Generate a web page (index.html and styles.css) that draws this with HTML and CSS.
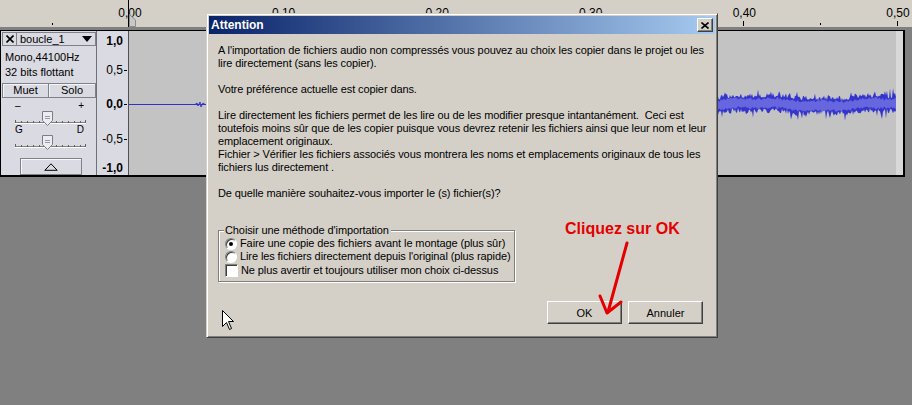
FILE: index.html
```html
<!DOCTYPE html>
<html lang="fr">
<head>
  <meta charset="UTF-8">
  <title>Audacity - Attention</title>
  <link rel="stylesheet" href="styles.css">
</head>
<body>

<div class="ruler">
  <div class="scale">
    <div class="cell"><div class="tick minor"></div></div>
    <div class="cell"><span class="label">0,00</span><div class="tick"></div></div>
    <div class="cell"><div class="tick minor"></div></div>
    <div class="cell"><span class="label">0,10</span><div class="tick"></div></div>
    <div class="cell"><div class="tick minor"></div></div>
    <div class="cell"><span class="label">0,20</span><div class="tick"></div></div>
    <div class="cell"><div class="tick minor"></div></div>
    <div class="cell"><span class="label">0,30</span><div class="tick"></div></div>
    <div class="cell"><div class="tick minor"></div></div>
    <div class="cell"><span class="label">0,40</span><div class="tick"></div></div>
    <div class="cell"><div class="tick minor"></div></div>
    <div class="cell last"><span class="label">0,50</span><div class="tick"></div></div>
  </div>
  <div class="cursor-line"></div>
  <svg class="play-head" width="8" height="13" viewBox="0 0 8 13">
    <polygon points="0.5,0.5 6.5,6 6.5,12.5 0.5,12.5" fill="#c8c8c8" stroke="#8a8a8a"/>
  </svg>
</div>

<div class="tracks">
  <div class="track">
    <div class="track-info">
      <div class="title-row">
        <div class="close-box">
          <svg width="8" height="8" viewBox="0 0 8 8"><path d="M0.5 0.5 L7.5 7.5 M7.5 0.5 L0.5 7.5" stroke="#000" stroke-width="1.6"/></svg>
        </div>
        <div class="name-box">
          <span>boucle_1</span>
          <svg width="10" height="6" viewBox="0 0 10 6"><polygon points="0,0 10,0 5,6" fill="#000"/></svg>
        </div>
      </div>
      <div class="info-line first">Mono,44100Hz</div>
      <div class="info-line">32 bits flottant</div>
      <div class="mute-solo">
        <div class="small-btn mute">Muet</div>
        <div class="small-btn solo">Solo</div>
      </div>
      <div class="slider">
        <div class="slider-labels"><span>–</span><span>+</span></div>
        <svg width="95" height="16" viewBox="0 0 95 16">
          <line x1="13" y1="12.5" x2="84" y2="12.5" stroke="#808080"/>
          <line x1="13" y1="13.5" x2="84" y2="13.5" stroke="#ffffff"/>
          <path d="M13.5 10 V13 M19.5 11 V13 M25.5 11 V13 M31.5 11 V13 M37.5 11 V13 M54.5 11 V13 M60.5 11 V13 M66.5 11 V13 M72.5 11 V13 M78.5 11 V13 M83.5 10 V13" stroke="#606060"/>
          <polygon points="40.5,1.5 50.5,1.5 50.5,10.5 45.5,15.5 40.5,10.5" fill="#ececf2" stroke="#7c7c84"/>
          <path d="M43 6.5 H48 M43 8.5 H48" stroke="#9a9aa4"/>
        </svg>
      </div>
      <div class="slider pan">
        <div class="slider-labels"><span>G</span><span>D</span></div>
        <svg width="95" height="16" viewBox="0 0 95 16">
          <line x1="13" y1="12.5" x2="84" y2="12.5" stroke="#808080"/>
          <line x1="13" y1="13.5" x2="84" y2="13.5" stroke="#ffffff"/>
          <path d="M13.5 10 V13 M19.5 11 V13 M25.5 11 V13 M31.5 11 V13 M37.5 11 V13 M54.5 11 V13 M60.5 11 V13 M66.5 11 V13 M72.5 11 V13 M78.5 11 V13 M83.5 10 V13" stroke="#606060"/>
          <polygon points="40.5,1.5 50.5,1.5 50.5,10.5 45.5,15.5 40.5,10.5" fill="#ececf2" stroke="#7c7c84"/>
          <path d="M43 6.5 H48 M43 8.5 H48" stroke="#9a9aa4"/>
        </svg>
      </div>
      <div class="collapse-row">
        <div class="collapse-btn">
          <svg width="14" height="8" viewBox="0 0 14 8"><polygon points="7,0.8 13.2,7.3 0.8,7.3" fill="none" stroke="#000"/></svg>
        </div>
      </div>
    </div>

    <div class="vruler">
      <div class="vrow strong"><span>1,0</span><i class="vtick hidden"></i></div>
      <div class="vrow"><span>0,5</span><i class="vtick"></i></div>
      <div class="vrow strong"><span>0,0</span><i class="vtick"></i></div>
      <div class="vrow"><span>-0,5</span><i class="vtick"></i></div>
      <div class="vrow strong"><span>-1,0</span><i class="vtick hidden"></i></div>
    </div>

    <div class="wave">
      <svg id="wave" width="767" height="144" viewBox="0 0 767 144">
        <line x1="0" y1="73.5" x2="600" y2="73.5" stroke="#3232c8"/>
        <path d="M66 73.5 L68 72 L69 75 L71 71 L72 76 L74 72 L76 73.5" fill="none" stroke="#3232c8"/>
      </svg>
    </div>
    <div class="wave-end"></div>
  </div>
</div>

<div class="dialog">
  <div class="titlebar">
    <span class="title">Attention</span>
    <div class="title-close">
      <svg width="8" height="7" viewBox="0 0 8 7"><path d="M0.5 0.5 L7.5 6.5 M7.5 0.5 L0.5 6.5" stroke="#000" stroke-width="1.6"/></svg>
    </div>
  </div>
  <div class="dialog-body">
    <div class="message">
      <p>A l'importation de fichiers audio non compressés vous pouvez au choix les copier dans le projet ou les<br>lire directement (sans les copier).</p>
      <p>Votre préférence actuelle est copier dans.</p>
      <p>Lire directement les fichiers permet de les lire ou de les modifier presque intantanément.&nbsp; Ceci est<br>toutefois moins sûr que de les copier puisque vous devrez retenir les fichiers ainsi que leur nom et leur<br>emplacement originaux.<br>Fichier &gt; Vérifier les fichiers associés vous montrera les noms et emplacements originaux de tous les<br>fichiers lus directement .</p>
      <p>De quelle manière souhaitez-vous importer le (s) fichier(s)?</p>
    </div>

    <fieldset class="group">
      <legend>Choisir une méthode d'importation</legend>
      <div class="option"><span class="radio checked"></span>Faire une copie des fichiers avant le montage (plus sûr)</div>
      <div class="option"><span class="radio"></span>Lire les fichiers directement depuis l'original (plus rapide)</div>
      <div class="option last"><span class="checkbox"></span>Ne plus avertir et toujours utiliser mon choix ci-dessus</div>
    </fieldset>

    <div class="buttons">
      <div class="win-btn">OK</div>
      <div class="win-btn">Annuler</div>
    </div>
  </div>
</div>

<div class="note">Cliquez sur OK</div>
<svg class="note-arrow" width="40" height="80" viewBox="0 0 40 80">
  <path d="M30 3 L11 72" stroke="#e40000" stroke-width="3" fill="none" stroke-linecap="round"/>
  <path d="M3 56 L10 73 L24 62" stroke="#e40000" stroke-width="3" fill="none" stroke-linecap="round" stroke-linejoin="round"/>
</svg>

<svg class="pointer" width="13" height="21" viewBox="0 0 13 21">
  <path d="M0.5 0.5 L0.5 16.5 L4.5 12.5 L7.5 19.5 L9.5 18.5 L6.5 11.5 L11.5 11.5 Z" fill="#fff" stroke="#000"/>
</svg>

<script>
// noisy part of the clip, drawn as min/max + rms envelopes
const wave = document.getElementById('wave');
let seed = 12345;
function rand() {
  seed = (seed * 16807) % 2147483647;
  return seed / 2147483647;
}

const mid = 73.5;
const outerTop = [], outerBottom = [], innerTop = [], innerBottom = [];
for (let x = 560; x <= 767; x++) {
  const c = mid + Math.sin(x / 21) * 1.6 + Math.sin(x / 7) * 0.7;
  const up = 5 + rand() * 5 + (rand() > 0.8 ? rand() * 6 : 0);
  const down = 5 + rand() * 5 + (rand() > 0.8 ? rand() * 6 : 0);
  outerTop.push(x + ',' + (c - up).toFixed(1));
  outerBottom.push(x + ',' + (c + down).toFixed(1));
  const r = 3 + rand() * 3;
  innerTop.push(x + ',' + (c - r).toFixed(1));
  innerBottom.push(x + ',' + (c + r).toFixed(1));
}

function addPolygon(points, color) {
  const poly = document.createElementNS('http://www.w3.org/2000/svg', 'polygon');
  poly.setAttribute('points', points.join(' '));
  poly.setAttribute('fill', color);
  wave.appendChild(poly);
}

addPolygon(outerTop.concat(outerBottom.reverse()), '#3434cc');
addPolygon(innerTop.concat(innerBottom.reverse()), '#6666de');
</script>

</body>
</html>
```

FILE: styles.css
```css
body {
  margin: 0;
  background-color: #808080;
  font-family: "Liberation Sans", Arial, sans-serif;
  font-size: 11px;
  color: #000;
  width: 912px;
  height: 405px;
  overflow: hidden;
  position: relative;
}

/* time ruler */

.ruler {
  height: 27px;
  background-color: #d4d0c8;
  position: relative;
  overflow: hidden;
}

.scale {
  display: flex;
  padding-left: 52px;
}

.cell {
  flex: none;
  width: 76.8px;
  height: 27px;
  display: flex;
  flex-direction: column;
  align-items: flex-start;
}

.cell.last {
  width: 14px;
}

.label {
  margin-top: 6px;
  transform: translateX(-45%);
  font-size: 12px;
  line-height: 14px;
}

.tick {
  margin-top: auto;
  margin-bottom: 1px;
  width: 1px;
  height: 5px;
  background-color: #000;
}

.tick.minor {
  height: 2px;
  margin-bottom: 2px;
}

.cursor-line {
  position: absolute;
  left: 128px;
  top: 0;
  width: 1px;
  height: 27px;
  background-color: #000;
}

.play-head {
  position: absolute;
  left: 129px;
  top: 14px;
}

/* track */

.tracks {
  padding-top: 3px;
}

.track {
  display: flex;
  width: 905px;
  height: 147px;
  box-sizing: border-box;
  border-top: 1px solid #000;
  border-bottom: 2px solid #000;
  border-left: 1px solid #000;
  border-right: 2px solid #000;
}

.track-info {
  width: 96px;
  box-sizing: border-box;
  border-right: 1px solid #707078;
  background-color: #dadae2;
  padding: 1px 0 0 1px;
  display: flex;
  flex-direction: column;
}

.title-row {
  display: flex;
  height: 14px;
}

.close-box {
  width: 15px;
  box-sizing: border-box;
  border: 1px solid #808088;
  display: flex;
  align-items: center;
  justify-content: center;
}

.name-box {
  flex: 1;
  border: 1px solid #808088;
  border-left: none;
  display: flex;
  align-items: center;
  justify-content: space-between;
  padding: 0 3px 0 3px;
  line-height: 12px;
}

.info-line {
  padding-left: 3px;
  height: 15px;
  line-height: 15px;
}

.info-line.first {
  margin-top: 4px;
}

.mute-solo {
  display: flex;
  margin-top: 3px;
  height: 15px;
}

.small-btn {
  box-sizing: border-box;
  height: 15px;
  border: 1px solid #808088;
  box-shadow: inset 1px 1px #f4f4f8;
  text-align: center;
  line-height: 13px;
}

.mute {
  width: 47px;
}

.solo {
  flex: 1;
  border-left: none;
}

.slider {
  height: 28px;
  display: flex;
  flex-direction: column;
}

.slider.pan {
  margin-top: -4px;
}

.slider-labels {
  display: flex;
  justify-content: space-between;
  padding: 0 12px 0 13px;
  height: 12px;
  font-size: 10px;
  line-height: 12px;
  margin-top: 2px;
}

.slider svg {
  display: block;
  margin-top: -2px;
}

.collapse-row {
  margin-top: 8px;
  padding-left: 18px;
}

.collapse-btn {
  width: 62px;
  height: 17px;
  box-sizing: border-box;
  border: 1px solid #808088;
  box-shadow: inset 1px 1px #f8f8fc;
  display: flex;
  align-items: center;
  justify-content: center;
}

.collapse-btn svg {
  display: block;
}

/* vertical ruler */

.vruler {
  width: 32px;
  box-sizing: border-box;
  border-right: 1px solid #505058;
  background-color: #dadae2;
  display: grid;
  grid-template-rows: 29px 34px 35px 29px 14px;
  padding-top: 3px;
  font-size: 12px;
}

.vrow {
  display: flex;
  justify-content: flex-end;
  align-items: center;
  height: 14px;
  line-height: 14px;
  padding-right: 1px;
}

.vrow.strong {
  font-weight: bold;
}

.vtick {
  width: 3px;
  height: 1px;
  margin-left: 1px;
  background-color: #000;
}

.vtick.hidden {
  background-color: transparent;
}

/* waveform */

.wave {
  width: 767px;
  background-color: #c3c3c3;
}

.wave svg {
  display: block;
}

.wave-end {
  width: 7px;
  background-color: #d8d8d8;
}

/* dialog */

.dialog {
  position: absolute;
  left: 206px;
  top: 13px;
  width: 512px;
  height: 325px;
  box-sizing: border-box;
  background-color: #d4d0c8;
  border: 1px solid;
  border-color: #d4d0c8 #404040 #404040 #d4d0c8;
  box-shadow: inset 1px 1px #ffffff, inset -1px -1px #808080;
  padding: 2px;
  display: flex;
  flex-direction: column;
}

.titlebar {
  height: 18px;
  background: linear-gradient(to right, #0a246a, #a6caf0);
  display: flex;
  align-items: center;
  justify-content: space-between;
  padding: 0 2px 0 2px;
}

.title {
  color: #fff;
  font-weight: bold;
  font-size: 12px;
}

.title-close {
  width: 16px;
  height: 14px;
  box-sizing: border-box;
  background-color: #d4d0c8;
  border: 1px solid;
  border-color: #ffffff #404040 #404040 #ffffff;
  box-shadow: inset -1px -1px #808080;
  display: flex;
  align-items: center;
  justify-content: center;
}

.dialog-body {
  flex: 1;
  display: flex;
  flex-direction: column;
  padding: 10px 10px 11px 9px;
}

.message p {
  margin: 0 0 13px;
  line-height: 13px;
  white-space: nowrap;
  letter-spacing: -0.1px;
}

.message p:last-child {
  margin-bottom: 0;
}

.group {
  margin: 24px 0 0;
  width: 297px;
  box-sizing: border-box;
  border: 1px solid #808080;
  box-shadow: inset 1px 1px #ffffff, 1px 1px #ffffff;
  padding: 0 0 4px 6px;
  letter-spacing: -0.1px;
}

.group legend {
  padding: 0 2px 0 1px;
  margin-left: -1px;
  line-height: 13px;
  background-color: #d4d0c8;
}

.option {
  display: flex;
  align-items: center;
  gap: 3px;
  height: 13px;
  line-height: 13px;
  white-space: nowrap;
}

.option.last {
  height: 14px;
}

.radio {
  width: 12px;
  height: 12px;
  box-sizing: border-box;
  border-radius: 50%;
  border: 1px solid;
  border-color: #808080 #ffffff #ffffff #808080;
  box-shadow: inset 1px 1px #404040;
  background-color: #fff;
  display: flex;
  align-items: center;
  justify-content: center;
}

.radio.checked::after {
  content: "";
  width: 4px;
  height: 4px;
  border-radius: 50%;
  background-color: #000;
}

.checkbox {
  width: 13px;
  height: 13px;
  box-sizing: border-box;
  border: 1px solid;
  border-color: #808080 #ffffff #ffffff #808080;
  box-shadow: inset 1px 1px #404040;
  background-color: #fff;
}

.buttons {
  margin-top: auto;
  display: flex;
  justify-content: flex-end;
  gap: 6px;
  padding-right: 2px;
}

.win-btn {
  width: 75px;
  height: 23px;
  box-sizing: border-box;
  border: 1px solid;
  border-color: #ffffff #404040 #404040 #ffffff;
  box-shadow: inset -1px -1px #808080;
  display: flex;
  align-items: center;
  justify-content: center;
}

/* annotations over the screenshot */

.note {
  position: absolute;
  left: 565px;
  top: 220px;
  color: #e40000;
  font-weight: bold;
  font-size: 16px;
  line-height: 18px;
}

.note-arrow {
  position: absolute;
  left: 597px;
  top: 240px;
}

.pointer {
  position: absolute;
  left: 222px;
  top: 310px;
}
```
